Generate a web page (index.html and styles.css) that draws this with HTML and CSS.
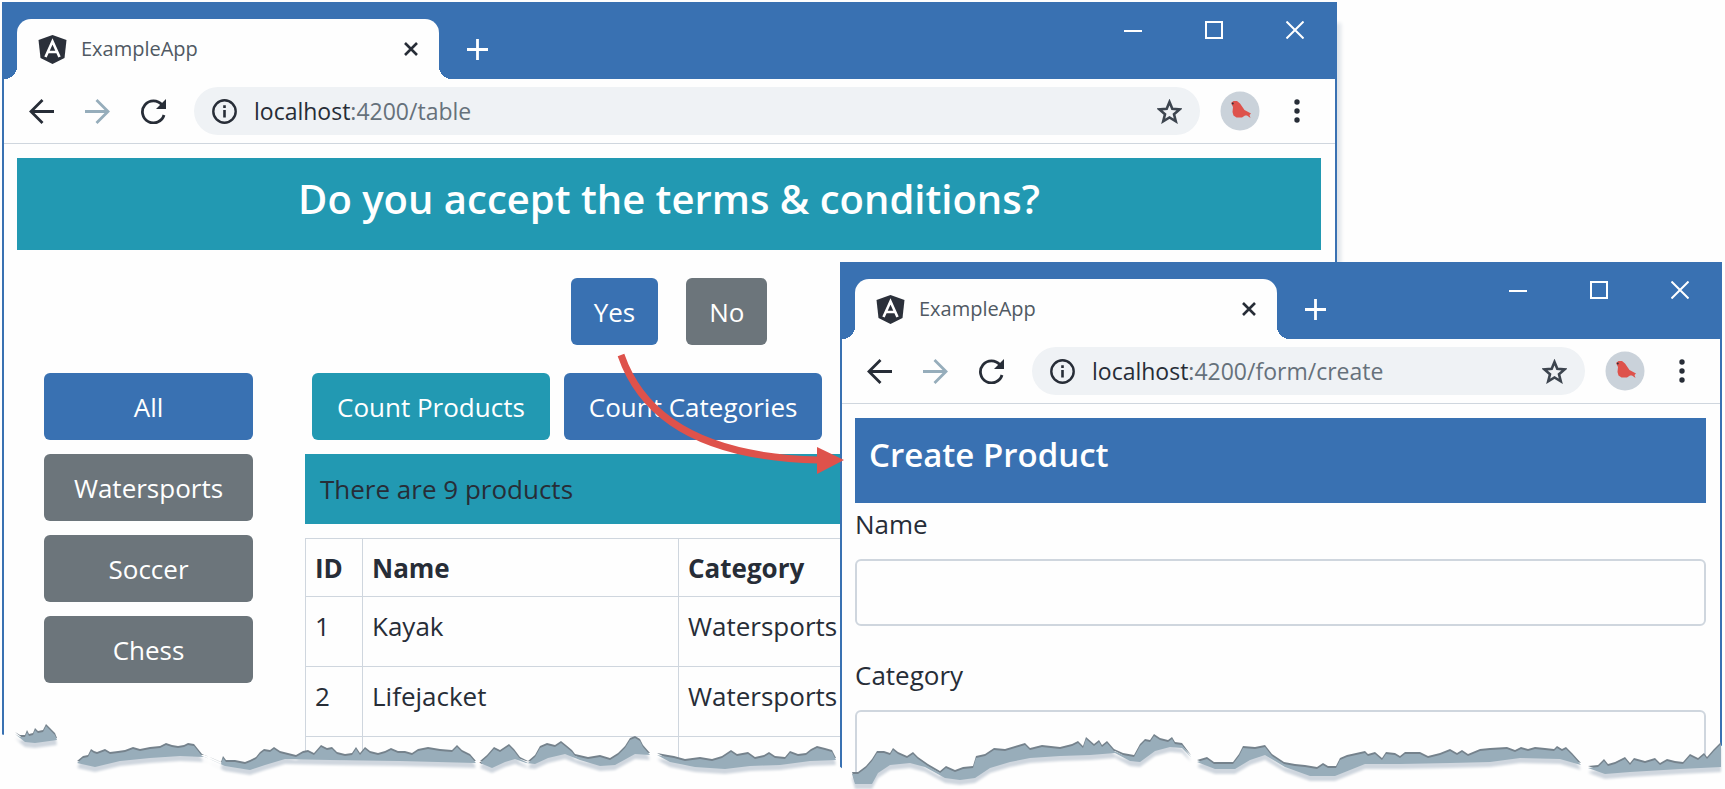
FILE: index.html
```html
<!DOCTYPE html>
<html lang="en">
<head>
<meta charset="utf-8">
<title>ExampleApp</title>
<link rel="stylesheet" href="styles.css">
</head>
<body>
<svg class="sprite" aria-hidden="true">
  <symbol id="shield" viewBox="0 0 29 29">
    <path fill="#2b303a" d="M14.500 0 28.500 5 26.500 23 14.500 29 2.500 23 .5 5Z"/>
    <path fill="none" stroke="#fff" stroke-width="2.600" d="M7.500 22 14.500 6.500 21.500 22M10.500 17h8"/>
  </symbol>
  <symbol id="cross" viewBox="0 0 14 14"><path fill="none" stroke="currentColor" stroke-width="2.600" d="M1 1 13 13M13 1 1 13"/></symbol>
  <symbol id="plus" viewBox="0 0 21 21"><path fill="none" stroke="currentColor" stroke-width="2.800" d="M10.500 0V21M0 10.500H21"/></symbol>
  <symbol id="minimize" viewBox="0 0 18 18"><path fill="none" stroke="currentColor" stroke-width="2" d="M0 10H18"/></symbol>
  <symbol id="maximize" viewBox="0 0 18 18"><path fill="none" stroke="currentColor" stroke-width="2" d="M1 1H17V17H1Z"/></symbol>
  <symbol id="close" viewBox="0 0 18 18"><path fill="none" stroke="currentColor" stroke-width="2" d="M.5.5 17.500 17.500M17.500.5.5 17.500"/></symbol>
  <symbol id="arrow" viewBox="0 0 25 25"><path fill="none" stroke="currentColor" stroke-width="2.800" d="M25 12.500H2M13.500 1 2 12.500 13.500 24"/></symbol>
  <symbol id="reload" viewBox="0 0 25 25">
    <path fill="none" stroke="currentColor" stroke-width="2.800" d="M21 6A11 11 0 1 0 23 16"/>
    <path fill="currentColor" d="M25 0V10H15Z"/>
  </symbol>
  <symbol id="info" viewBox="0 0 25 25">
    <circle cx="12.500" cy="12.500" r="11.200" fill="none" stroke="currentColor" stroke-width="2.400"/>
    <path fill="currentColor" d="M11.200 11h2.600v7.500h-2.600ZM11.200 6.300h2.600v2.600h-2.600Z"/>
  </symbol>
  <symbol id="star" viewBox="0 0 25 25"><path fill="none" stroke="currentColor" stroke-width="2.600" d="M12.500 3 15.300 9.800 22.600 10.400 17 15.200 18.800 22.300 12.500 18.500 6.200 22.300 8 15.200 2.400 10.400 9.700 9.800Z"/></symbol>
  <symbol id="bird" viewBox="0 0 40 40">
    <circle cx="20" cy="20" r="19.500" fill="#cad2da"/>
    <path fill="#de524b" d="M11 12 13.500 10 17 10 20 12.500 24.500 19 31 22.500 29.500 24 30.500 27 27 24.500 25 24.500 22 26.500 16.500 26.500 13.500 24.500 12.500 21 13 16Z"/>
    <circle cx="12.800" cy="12.500" r=".9" fill="#2b303a"/>
  </symbol>
  <symbol id="dots" viewBox="0 0 6 24"><g fill="currentColor"><circle cx="3" cy="3" r="2.700"/><circle cx="3" cy="12" r="2.700"/><circle cx="3" cy="21" r="2.700"/></g></symbol>
</svg>

<main class="stage">
  <section class="window window-back">
    <header class="titlebar">
      <div class="tab">
        <svg class="favicon"><use href="#shield"/></svg>
        <span class="tab-title">ExampleApp</span>
        <button class="icon-btn" aria-label="Close tab"><svg class="ico-14"><use href="#cross"/></svg></button>
      </div>
      <button class="icon-btn new-tab" aria-label="New tab"><svg class="ico-21"><use href="#plus"/></svg></button>
      <div class="controls">
        <button class="icon-btn" aria-label="Minimize"><svg class="ico-18"><use href="#minimize"/></svg></button>
        <button class="icon-btn" aria-label="Maximize"><svg class="ico-18"><use href="#maximize"/></svg></button>
        <button class="icon-btn" aria-label="Close"><svg class="ico-18"><use href="#close"/></svg></button>
      </div>
    </header>
    <nav class="toolbar">
      <button class="icon-btn" aria-label="Back"><svg class="ico-25"><use href="#arrow"/></svg></button>
      <button class="icon-btn forward" aria-label="Forward"><svg class="ico-25"><use href="#arrow"/></svg></button>
      <button class="icon-btn" aria-label="Reload"><svg class="ico-25"><use href="#reload"/></svg></button>
      <div class="omnibox">
        <svg class="ico-25"><use href="#info"/></svg>
        <span class="url">localhost<span class="path">:4200/table</span></span>
        <button class="icon-btn" aria-label="Bookmark"><svg class="ico-25 star"><use href="#star"/></svg></button>
      </div>
      <button class="icon-btn" aria-label="Profile"><svg class="ico-40"><use href="#bird"/></svg></button>
      <button class="icon-btn menu" aria-label="Menu"><svg class="dots"><use href="#dots"/></svg></button>
    </nav>
    <div class="page">
      <h1 class="banner">Do you accept the terms &amp; conditions?</h1>
      <div class="answers">
        <button class="btn primary">Yes</button>
        <button class="btn secondary">No</button>
      </div>
      <div class="columns">
        <div class="categories">
          <button class="btn primary">All</button>
          <button class="btn secondary">Watersports</button>
          <button class="btn secondary">Soccer</button>
          <button class="btn secondary">Chess</button>
        </div>
        <div class="content">
          <div class="counts">
            <button class="btn info">Count Products</button>
            <button class="btn primary">Count Categories</button>
          </div>
          <div class="summary">There are 9 products</div>
          <table class="products">
            <thead><tr><th class="col-id">ID</th><th class="col-name">Name</th><th>Category</th></tr></thead>
            <tbody>
              <tr><td>1</td><td>Kayak</td><td>Watersports</td></tr>
              <tr><td>2</td><td>Lifejacket</td><td>Watersports</td></tr>
              <tr><td>3</td><td>Soccer Ball</td><td>Soccer</td></tr>
            </tbody>
          </table>
        </div>
      </div>
    </div>
  </section>

  <section class="window window-front">
    <header class="titlebar">
      <div class="tab">
        <svg class="favicon"><use href="#shield"/></svg>
        <span class="tab-title">ExampleApp</span>
        <button class="icon-btn" aria-label="Close tab"><svg class="ico-14"><use href="#cross"/></svg></button>
      </div>
      <button class="icon-btn new-tab" aria-label="New tab"><svg class="ico-21"><use href="#plus"/></svg></button>
      <div class="controls">
        <button class="icon-btn" aria-label="Minimize"><svg class="ico-18"><use href="#minimize"/></svg></button>
        <button class="icon-btn" aria-label="Maximize"><svg class="ico-18"><use href="#maximize"/></svg></button>
        <button class="icon-btn" aria-label="Close"><svg class="ico-18"><use href="#close"/></svg></button>
      </div>
    </header>
    <nav class="toolbar">
      <button class="icon-btn" aria-label="Back"><svg class="ico-25"><use href="#arrow"/></svg></button>
      <button class="icon-btn forward" aria-label="Forward"><svg class="ico-25"><use href="#arrow"/></svg></button>
      <button class="icon-btn" aria-label="Reload"><svg class="ico-25"><use href="#reload"/></svg></button>
      <div class="omnibox">
        <svg class="ico-25"><use href="#info"/></svg>
        <span class="url">localhost<span class="path">:4200/form/create</span></span>
        <button class="icon-btn" aria-label="Bookmark"><svg class="ico-25 star"><use href="#star"/></svg></button>
      </div>
      <button class="icon-btn" aria-label="Profile"><svg class="ico-40"><use href="#bird"/></svg></button>
      <button class="icon-btn menu" aria-label="Menu"><svg class="dots"><use href="#dots"/></svg></button>
    </nav>
    <form class="page">
      <h2 class="form-title">Create Product</h2>
      <div class="field">
        <label for="name">Name</label>
        <input id="name" type="text">
      </div>
      <div class="field">
        <label for="category">Category</label>
        <input id="category" type="text">
      </div>
    </form>
  </section>

  <svg class="overlay" viewBox="0 0 1725 789" aria-hidden="true">
    <path class="paper" d="M0 734 18 738 57 738 77 763 95 757 200 755 225 764 250 765 290 757 476 760 482 764 500 757 526 762 545 753 570 753 600 762 620 760 635 745 655 757 700 763 760 761 815 755 838 765 844 770 855 776 880 758 910 759 940 774 970 772 990 757 1060 752 1110 752 1134 759 1155 744 1180 748 1191 758 1214 766 1235 766 1245 753 1265 751 1284 765 1310 770 1335 770 1350 760 1450 758 1560 754 1575 758 1581 766 1590 768 1680 766 1714 754 1725 742V789H0Z"/>
    <path class="tear" d="M15 734 20 737 25 737 27 732 29 736 33 735 35 730 38 733 43 732 46 726 50 730 55 735 57 740 35 743 25 742Z"/>
    <path class="tear" d="M77 763 83 758 88 757 91 751 94 753 97 754 105 751 110 754 118 753 125 752 133 749 140 751 150 749 160 748 166 745 172 747 178 748 184 747 188 745 194 746 198 751 202 756 212 760 221 764 223 758 226 762 235 762 245 764 250 762 256 759 260 754 264 751 270 752 274 749 280 753 288 755 296 757 303 753 308 752 314 755 321 747 327 750 332 749 337 754 345 756 352 755 356 749 360 755 365 749 370 753 378 755 385 753 391 750 398 753 405 753 412 755 418 751 428 749 440 751 452 752 457 747 462 752 470 756 476 763 400 761 330 760 285 759 265 765 250 770 225 766 205 757 180 756 150 758 120 761 95 767Z"/>
    <path class="tear" d="M480 763 487 757 494 749 500 752 509 746 514 751 520 759 528 763 535 757 540 748 547 745 555 747 561 743 566 747 572 752 575 756 588 759 600 757 610 760 618 755 625 748 630 740 635 738 640 741 643 747 650 755 635 754 615 765 600 766 580 760 565 754 548 758 535 764 526 763 515 759 505 762 492 768Z"/>
    <path class="tear" d="M657 755 668 757 674 758 685 761 700 759 712 761 722 758 731 752 737 756 748 754 755 759 764 757 769 754 775 758 785 759 790 753 798 756 806 755 811 751 817 748 825 750 832 752 836 760 810 761 780 765 750 766 725 769 695 767 670 762Z"/>
    <path class="tear" d="M852 774 858 774 866 768 872 761 877 753 884 753 890 755 893 750 898 754 907 758 913 754 918 759 928 766 940 773 946 768 955 772 963 769 973 768 976 758 985 756 994 750 1005 751 1015 748 1025 745 1030 750 1042 747 1060 749 1072 746 1078 743 1083 748 1086 739 1094 746 1099 742 1102 747 1107 743 1114 751 1123 755 1134 757 1140 746 1145 741 1150 742 1154 736 1160 740 1168 742 1172 739 1175 744 1182 745 1191 757 1182 748 1170 747 1155 751 1140 762 1130 761 1115 753 1090 755 1060 756 1030 758 1010 762 990 768 975 778 960 780 945 778 925 767 910 763 890 765 878 773 872 784 855 784Z"/>
    <path class="tear" d="M1197 762 1207 759 1214 764 1233 764 1239 756 1243 748 1255 749 1265 747 1272 756 1284 764 1295 766 1305 767 1317 769 1323 765 1328 768 1336 768 1340 760 1347 757 1356 755 1365 753 1368 756 1375 754 1382 760 1386 754 1395 755 1400 758 1405 754 1420 754 1428 758 1440 755 1450 751 1457 755 1462 752 1468 756 1480 751 1490 750 1507 749 1515 752 1521 749 1528 751 1535 749 1545 750 1554 751 1557 748 1562 751 1566 749 1572 755 1581 765 1560 759 1520 758 1490 762 1450 763 1400 764 1365 764 1350 770 1335 776 1310 776 1285 767 1265 755 1250 760 1235 769 1215 769Z"/>
    <path class="tear" d="M1588 768 1598 767 1604 761 1608 766 1615 764 1625 759 1630 765 1634 760 1645 763 1655 760 1660 765 1667 761 1675 763 1683 764 1690 756 1698 760 1704 755 1707 759 1714 751 1721 744V767L1680 769 1630 772 1605 774Z"/>
    <path class="pointer-line" d="M621 355C640 410 692 457 818 460"/>
    <path class="pointer-head" d="M817 447 844 460 817 474Z"/>
  </svg>
</main>
</body>
</html>
```

FILE: styles.css
```css
:root {
  --blue: #3971b2;
  --teal: #2299b2;
  --gray: #6c757b;
  --ink: #272d37;
  --line: #cfd6de;
  --paper: #fefefe;
}

* { box-sizing: border-box; }

body {
  margin: 0;
  background: var(--paper);
  color: var(--ink);
  font-family: "Open Sans", "Noto Sans", sans-serif;
  font-size: 26px;
  line-height: 40px;
}

svg { display: block; flex: none; }
.sprite { position: absolute; width: 0; height: 0; }

.stage {
  position: relative;
  height: 100vh;
  overflow: hidden;
  padding: 2px 388px 0 2px;
}

.window {
  background: var(--paper);
  border: 2px solid var(--blue);
  border-top: 0;
}

.window-back {
  min-height: 100%;
  box-shadow: 5px 20px 4px -1px #dfe4ea;
}

.window-front {
  position: absolute;
  top: 262px;
  right: 3px;
  bottom: 0;
  left: 840px;
}

.titlebar {
  display: flex;
  align-items: flex-end;
  margin: 0 -2px;
  padding: 17px 33px 0 15px;
  background: var(--blue);
  color: #fff;
}

.tab {
  position: relative;
  display: flex;
  align-items: center;
  gap: 14px;
  width: 422px;
  height: 60px;
  padding: 0 21px;
  border-radius: 14px 14px 0 0;
  background: var(--paper);
  color: var(--ink);
}

.tab::before,
.tab::after {
  content: "";
  position: absolute;
  bottom: 0;
  width: 13px;
  height: 13px;
}

.tab::before {
  right: 100%;
  background: radial-gradient(circle at 0 0, transparent 13px, var(--paper) 13px);
}

.tab::after {
  left: 100%;
  background: radial-gradient(circle at 100% 0, transparent 13px, var(--paper) 13px);
}

.tab-title {
  flex: 1;
  color: #505963;
  font-size: 20px;
}

.favicon { width: 29px; height: 29px; }
.ico-14 { width: 14px; height: 14px; }
.ico-18 { width: 18px; height: 18px; }
.ico-21 { width: 21px; height: 21px; }
.ico-25 { width: 25px; height: 25px; }
.ico-40 { width: 40px; height: 40px; }
.dots { width: 6px; height: 24px; }

.icon-btn {
  display: block;
  padding: 0;
  border: 0;
  background: none;
  color: inherit;
}

.new-tab { margin: 0 auto 19px 28px; }

.controls {
  display: flex;
  align-self: flex-start;
  gap: 63px;
  padding-top: 2px;
}

.toolbar {
  display: flex;
  align-items: center;
  height: 65px;
  gap: 31px;
  padding: 0 35px 0 25px;
  border-bottom: 1px solid var(--line);
}

.forward {
  color: #96adbb;
  transform: scaleX(-1);
}

.omnibox {
  display: flex;
  flex: 1;
  align-items: center;
  gap: 17px;
  height: 48px;
  margin: 0 -11px 0 -3px;
  padding: 0 18px;
  border-radius: 24px;
  background: #eff2f5;
}

.url {
  flex: 1;
  font-size: 23px;
}

.path { color: #66717b; }
.star { color: #3d454f; }
.menu { margin-left: 3px; }

.page { padding: 14px 14px 0 13px; }

.banner,
.form-title {
  margin: 0;
  color: #fff;
  font-weight: 600;
}

.banner {
  padding: 16px 14px 26px;
  background: var(--teal);
  font-size: 40px;
  line-height: 50px;
  text-align: center;
}

.answers {
  display: flex;
  justify-content: center;
  gap: 28px;
  padding: 28px 0;
}

.btn {
  padding: 14px 23px 13px;
  border: 0;
  border-radius: 6px;
  color: #fff;
  font: inherit;
}

.primary { background: var(--blue); }
.secondary { background: var(--gray); }
.info { background: var(--teal); }

.columns {
  display: grid;
  grid-template-columns: 209px 1fr;
  gap: 52px;
  padding-left: 27px;
}

.categories {
  display: flex;
  flex-direction: column;
  gap: 14px;
}

.counts {
  display: flex;
  gap: 14px;
  padding: 0 7px 14px;
}

.counts .btn {
  padding-right: 25px;
  padding-left: 25px;
}

.summary {
  padding: 15px;
  background: var(--teal);
}

.products {
  width: 100%;
  margin-top: 14px;
  border-collapse: collapse;
  table-layout: fixed;
}

.products th,
.products td {
  padding: 9px 9px 8px;
  border: 1px solid var(--line);
  text-align: left;
  vertical-align: top;
}

.products th { height: 58px; font-weight: 700; }
.products td { height: 70px; }
.col-id { width: 57px; }
.col-name { width: 316px; }

.form-title {
  padding: 14px 14px 26px;
  background: var(--blue);
  font-size: 33px;
  line-height: 45px;
}

.field { padding-bottom: 28px; }

.field label {
  display: block;
  padding: 1px 0 15px;
}

.field input {
  display: block;
  width: 100%;
  height: 67px;
  padding: 0 20px;
  border: 2px solid var(--line);
  border-radius: 6px;
  background: var(--paper);
  color: inherit;
  font: inherit;
}

.overlay {
  position: absolute;
  top: 0;
  left: 0;
  width: 100%;
  pointer-events: none;
}

.paper { fill: var(--paper); }

.tear {
  fill: #98adba;
  filter: drop-shadow(0 -2px 0 #75828c) drop-shadow(0 5px 1px #cfd6de);
}

.pointer-line {
  fill: none;
  stroke: #de524b;
  stroke-width: 7;
}

.pointer-head { fill: #de524b; }
```
